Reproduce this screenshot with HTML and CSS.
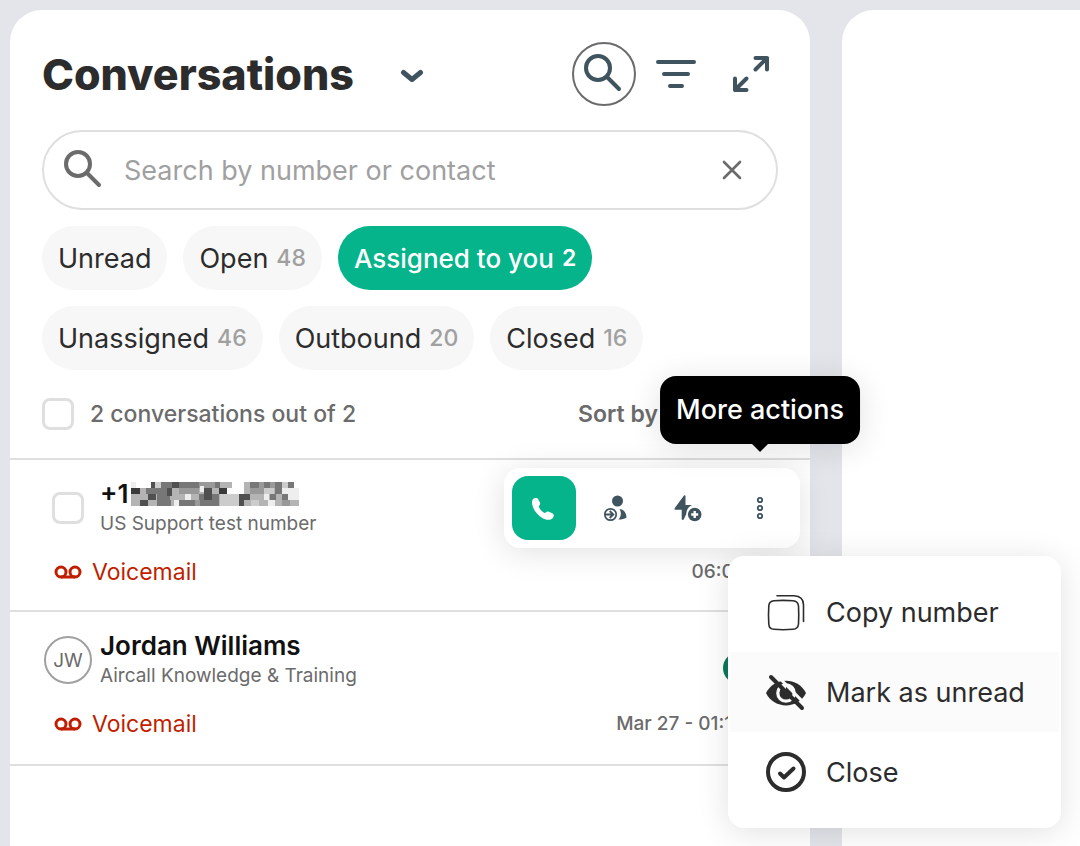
FILE: index.html
```
<!DOCTYPE html>
<html lang="en">
<head>
    <meta charset="UTF-8">
    <meta name="viewport" content="width=device-width, initial-scale=1.0">
    <title>Conversations</title>
    <link rel="stylesheet" href="styles.css">
</head>
<body>
    <div class="app">
        <main class="panel">
            <header class="panel-header">
                <h1>Conversations</h1>
                <button type="button" class="icon-button small" aria-label="Switch view">
                    <svg width="24" height="20" viewBox="0 0 24 20"><path d="M3.500 8.500 L12 15.500 L20.500 8.500" fill="none" stroke="currentColor" stroke-width="5" stroke-linecap="round" stroke-linejoin="round"/></svg>
                </button>
                <div class="header-tools">
                    <button type="button" class="icon-button ringed" aria-label="Search">
                        <svg width="60" height="60" viewBox="0 0 60 60" fill="none" stroke="currentColor" stroke-width="4" stroke-linecap="round"><circle cx="24" cy="24" r="12"/><path d="M33 33 L45 45"/></svg>
                    </button>
                    <button type="button" class="icon-button" aria-label="Filter">
                        <svg width="40" height="32" viewBox="0 0 40 32" fill="none" stroke="currentColor" stroke-width="4" stroke-linecap="round"><path d="M2 4 H38 M8 16 H32 M14 28 H26"/></svg>
                    </button>
                    <button type="button" class="icon-button" aria-label="Expand">
                        <svg width="44" height="40" viewBox="0 0 44 40" fill="none" stroke="currentColor" stroke-width="4" stroke-linecap="round" stroke-linejoin="round"><path d="M29.500 4 H41 V15.500 M41 4 L29.500 15.500"/><path d="M9 24.500 V36 H20.500 M9 36 L20.500 24.500"/></svg>
                    </button>
                </div>
            </header>

            <form class="search">
                <svg width="40" height="40" viewBox="0 0 40 40" fill="none" stroke="currentColor" stroke-width="4" stroke-linecap="round"><circle cx="14" cy="14" r="12"/><path d="M23 23 L35 35"/></svg>
                <input type="text" placeholder="Search by number or contact" aria-label="Search by number or contact">
                <button type="button" class="icon-button small clear" aria-label="Clear search">
                    <svg width="20" height="20" viewBox="0 0 20 20"><path d="M2 2 L18 18 M18 2 L2 18" stroke="currentColor" stroke-width="2.600" stroke-linecap="round"/></svg>
                </button>
            </form>

            <div class="chips">
                <button type="button" class="chip">Unread</button>
                <button type="button" class="chip">Open <span>48</span></button>
                <button type="button" class="chip active">Assigned to you <span>2</span></button>
                <button type="button" class="chip">Unassigned <span>46</span></button>
                <button type="button" class="chip">Outbound <span>20</span></button>
                <button type="button" class="chip">Closed <span>16</span></button>
            </div>

            <div class="list-bar">
                <input type="checkbox" id="selectAll">
                <label for="selectAll">2 conversations out of 2</label>
                <button type="button" class="sort">Sort by</button>
            </div>

            <ul class="list">
                <li class="row">
                    <div class="contact">
                        <div class="slot"><input type="checkbox" id="pick" aria-label="Select conversation"></div>
                        <div class="who">
                            <h2>+1
                                <svg class="masked" width="168" height="24" viewBox="0 0 168 24" shape-rendering="crispEdges">
                                    <g fill="#b4b4b4"><path d="M0 12h168v12h-168z M9 6h159v6h-159z M89 0h12v6h-12z M113 0h6v6h-6z"/></g>
                                    <g fill="#777"><path d="M15 6h25v6h-25z M26 12h13v6h-13z M30 0h11v6h-11z M26 18h14v6h-14z M48 0h20v6h-20z M48 18h16v6h-16z M68 12h20v12h-20z M84 0h5v6h-5z M119 0h9v6h-9z M133 0h6v6h-6z M144 0h7v12h-7z M157 0h6v6h-6z M151 12h6v6h-6z M139 12h6v6h-6z"/></g>
                                    <g fill="#999"><path d="M68 0h16v6h-16z M48 6h20v6h-20z M54 12h5v6h-5z M128 0h5v12h-5z M64 18h5v6h-5z M139 0h5v6h-5z M151 18h8v6h-8z M119 6h9v6h-9z"/></g>
                                    <g fill="#505050"><path d="M20 0h4v6h-4z M36 6h5v8h-5z M41 0h7v6h-7z M17 12h8v6h-8z M9 18h8v6h-8z M73 6h8v12h-8z M108 12h5v12h-5z M113 12h6v6h-6z"/></g>
                                    <g fill="#3a3a3a"><path d="M0 6h9v6h-9z M88 6h8v6h-8z"/></g>
                                    <g fill="#ccc"><path d="M24 0h6v6h-6z M96 12h12v12h-12z M89 12h7v12h-7z M151 0h6v6h-6z M133 6h10v6h-10z M120 18h8v6h-8z"/></g>
                                    <g fill="#eee"><path d="M0 0h5v6h-5z M151 6h17v6h-17z M157 12h11v6h-11z M54 12h6v6h-6z M69 4h4v6h-4z M43 18h5v6h-5z M133 12h5v6h-5z M137 18h7v6h-7z"/></g>
                                    <g fill="#fff"><path d="M5 0h15v6h-15z M101 0h12v12h-12z M163 0h5v6h-5z M96 6h6v6h-6z"/></g>
                                </svg>
                            </h2>
                            <p>US Support test number</p>
                        </div>
                    </div>
                    <div class="event">
                        <svg width="28" height="14" viewBox="0 0 28 14" fill="none" stroke="currentColor" stroke-width="3"><circle cx="7" cy="7" r="5"/><circle cx="21" cy="7" r="5"/><path d="M7 12 H21"/></svg>
                        <span>Voicemail</span>
                        <time>06:07 pm</time>
                    </div>

                    <div class="actions">
                        <button type="button" class="action call" aria-label="Call">
                            <svg width="24" height="24" viewBox="1 -1 24 24" fill="currentColor"><path d="M2.500 1.700 C4 .7 6.500 1 7.400 2.500 L9 5.700 C9.700 7.200 8.300 8.400 7.800 9.500 C8.500 12 10.800 14.600 13.500 16 C14.700 15.800 15.600 14.300 17.200 14.600 L21.300 16.300 C23.300 17.200 23 19.600 21.900 20.900 C19.500 23.500 15 23.300 11.300 21 C6.200 18 2.200 12.600 1.200 7.500 C.8 5.200.9 2.800 2.500 1.700 Z"/></svg>
                        </button>
                        <button type="button" class="action" aria-label="Assign">
                            <svg width="28" height="28" viewBox="0 0 28 28"><circle cx="15.500" cy="7" r="5.500" fill="currentColor"/><path d="M17.500 15 C21.500 15.300 24.400 18.500 24.500 23.500 C22.500 25 20 25.500 16.500 25.500 C19.500 22 19.500 18.500 17.500 15 Z" fill="currentColor"/><circle cx="8.500" cy="20.500" r="5.700" fill="none" stroke="currentColor" stroke-width="1.700"/><path d="M3 20.500 H11 M7.700 17 L11.300 20.500 L7.700 24" fill="none" stroke="currentColor" stroke-width="1.900"/></svg>
                        </button>
                        <button type="button" class="action" aria-label="Quick action">
                            <svg width="28" height="28" viewBox="0 0 28 28"><path d="M10 1.400 C10.700 1 11.500 1.300 11.500 2 V11 H18 C14.500 12.700 12.200 16 12.300 20 L9.700 25.500 C9.200 26.200 7.700 26 7.700 25 V15.800 H1.600 C.6 15.800.3 15 .8 14.100 Z" fill="currentColor"/><circle cx="20.700" cy="20.500" r="6.800" fill="currentColor"/><path d="M20.700 17 V24 M17.200 20.500 H24.200" stroke="#fff" stroke-width="2.400"/></svg>
                        </button>
                        <div class="more">
                            <button type="button" class="action" aria-label="More actions" aria-describedby="moreTip" aria-expanded="true">
                                <svg width="8" height="24" viewBox="0 0 8 24" fill="none" stroke="currentColor" stroke-width="1.800"><circle cx="4" cy="4" r="2.200"/><circle cx="4" cy="12" r="2.200"/><circle cx="4" cy="20" r="2.200"/></svg>
                            </button>
                            <div class="tooltip" id="moreTip" role="tooltip">More actions</div>
                            <div class="menu">
                                <button type="button" class="menu-item">
                                    <svg width="40" height="40" viewBox="0 0 40 40" fill="none" stroke="currentColor" stroke-width="1.600" stroke-linecap="round"><path d="M8 8.700 Q17 8 27 8.700 Q32 9 32.500 14 Q33 23 32.500 32 Q32 37 27 37.300 Q17 38.200 8 37.300 Q3 37 2.800 32 Q2.200 23 2.800 14 Q3 9 8 8.700 Z"/><path d="M11 3.700 H28 Q37.500 4 37.500 13 V29.500"/></svg>
                                    Copy number
                                </button>
                                <button type="button" class="menu-item hovered">
                                    <svg width="40" height="40" viewBox="0 0 40 40"><path d="M0 21 C8 4.500 32 4.500 40 21 C32 37.500 8 37.500 0 21 Z" fill="currentColor"/><circle cx="20" cy="21" r="8.200" fill="none" stroke="#fbfbfb" stroke-width="3.200"/><path d="M15 14 L20 19 V13 Z" fill="#fbfbfb"/><path d="M8.500 1 L40 33" stroke="#fbfbfb" stroke-width="3"/><path d="M5 5 L36 36" stroke="currentColor" stroke-width="4" stroke-linecap="round"/></svg>
                                    Mark as unread
                                </button>
                                <button type="button" class="menu-item">
                                    <svg width="40" height="40" viewBox="0 0 40 40" fill="none" stroke="currentColor" stroke-width="4" stroke-linecap="round" stroke-linejoin="round"><circle cx="20" cy="20" r="18"/><path d="M14 21.500 L18 25.500 L27.500 16.500"/></svg>
                                    Close
                                </button>
                            </div>
                        </div>
                    </div>
                </li>
                <li class="row">
                    <div class="contact">
                        <div class="slot avatar">JW</div>
                        <div class="who">
                            <h2>Jordan Williams</h2>
                            <p>Aircall Knowledge &amp; Training</p>
                        </div>
                        <span class="badge"></span>
                    </div>
                    <div class="event">
                        <svg width="28" height="14" viewBox="0 0 28 14" fill="none" stroke="currentColor" stroke-width="3"><circle cx="7" cy="7" r="5"/><circle cx="21" cy="7" r="5"/><path d="M7 12 H21"/></svg>
                        <span>Voicemail</span>
                        <time>Mar 27 - 01:10 pm</time>
                    </div>
                </li>
            </ul>
        </main>
        <section class="detail"></section>
    </div>
</body>
</html>
```
FILE: styles.css
```
* {
    box-sizing: border-box;
    margin: 0;
    padding: 0;
}

body {
    font-family: Inter, "Liberation Sans", sans-serif;
    font-size: 27px;
    color: #2c2c2c;
    background-color: #e4e5ea;
    overflow: hidden;
}

button,
input {
    font: inherit;
    color: inherit;
    border: none;
    background: none;
}

button {
    cursor: pointer;
}

svg {
    display: block;
    flex: none;
}

.app {
    display: grid;
    grid-template-columns: minmax(0, 800px) minmax(0, 1fr);
    gap: 32px;
    min-height: 100vh;
    padding: 10px 0 0 10px;
}

.panel {
    min-width: 0;
    background-color: #fff;
    border-radius: 32px 32px 0 0;
}

.detail {
    background-color: #fff;
    border-radius: 32px 0 0 0;
}

/* Header */
.panel-header {
    display: flex;
    align-items: center;
    padding: 32px 30px 24px 32px;
}

.panel-header h1 {
    font-size: 43px;
    font-weight: 800;
    line-height: 64px;
    margin-right: 42px;
}

.header-tools {
    display: flex;
    gap: 8px;
    margin-left: auto;
}

.icon-button {
    display: flex;
    align-items: center;
    justify-content: center;
    width: 64px;
    height: 64px;
    color: #3f545f;
}

.icon-button.small {
    width: auto;
    height: auto;
    padding: 4px;
}

.icon-button.ringed {
    border: 2px solid #6b6b6b;
    border-radius: 50%;
}

/* Search box */
.search {
    display: flex;
    align-items: center;
    height: 80px;
    margin: 0 32px 16px;
    padding: 0 30px 0 20px;
    border: 2px solid #dfdfdf;
    border-radius: 40px;
    color: #6b6b6b;
}

.search input {
    flex: 1;
    min-width: 0;
    padding: 0 20px;
    outline: none;
}

.search input::placeholder {
    color: #a0a0a0;
    opacity: 1;
}

.search .clear {
    color: #6b6b6b;
}

/* Filters */
.chips {
    display: flex;
    flex-wrap: wrap;
    gap: 16px;
    padding: 0 32px 28px;
}

.chip {
    display: flex;
    align-items: center;
    gap: 8px;
    height: 64px;
    padding: 0 16px;
    border-radius: 32px;
    background-color: #f7f7f7;
}

.chip span {
    font-size: 23px;
    font-weight: 500;
    color: #a0a0a0;
}

.chip.active {
    background-color: #05b48a;
    color: #fff;
    font-size: 26px;
    font-weight: 500;
}

.chip.active span {
    color: #fff;
    font-weight: 600;
}

/* List */
.list-bar {
    display: flex;
    align-items: center;
    gap: 16px;
    padding: 0 32px 28px;
    font-size: 23px;
    font-weight: 500;
    line-height: 32px;
    color: #6b6b6b;
}

.sort {
    margin-left: auto;
    padding-right: 120px;
    font-weight: 600;
}

input[type="checkbox"] {
    appearance: none;
    flex: none;
    width: 32px;
    height: 32px;
    border: 3px solid #dfdfdf;
    border-radius: 8px;
    background-color: #fff;
}

.list {
    list-style: none;
    border-top: 2px solid #dfdfdf;
}

.row {
    position: relative;
    padding: 24px 32px 22px 34px;
    border-bottom: 2px solid #dfdfdf;
}

.row:last-child {
    padding-bottom: 24px;
}

.contact {
    display: flex;
    align-items: center;
    gap: 8px;
    height: 48px;
    margin-bottom: 24px;
}

.slot {
    display: flex;
    align-items: center;
    justify-content: center;
    width: 48px;
    height: 48px;
}

.avatar {
    border: 2px solid #a0a0a0;
    border-radius: 50%;
    font-size: 19px;
    color: #6b6b6b;
}

.who h2 {
    display: flex;
    align-items: center;
    gap: 2px;
    font-size: 26px;
    font-weight: 600;
    line-height: 28px;
    color: #111;
}

.who p {
    margin-top: 4px;
    font-size: 19px;
    line-height: 24px;
    color: #6b6b6b;
}

.badge {
    align-self: flex-end;
    width: 55px;
    height: 32px;
    margin-left: auto;
    border-radius: 16px;
    background-color: #0b7a5b;
}

.event {
    display: flex;
    align-items: center;
    gap: 10px;
    padding-left: 10px;
    font-size: 23px;
    line-height: 32px;
    color: #bf1f00;
}

.event time {
    margin-left: auto;
    font-size: 19px;
    font-weight: 500;
    color: #6b6b6b;
}

/* Floating action bar over the first row */
.actions {
    position: absolute;
    top: 8px;
    right: 10px;
    z-index: 2;
    display: flex;
    gap: 8px;
    padding: 8px;
    border-radius: 16px;
    background-color: #fff;
    box-shadow: 0 4px 32px rgba(0, 0, 0, 0.12);
}

.action {
    display: flex;
    align-items: center;
    justify-content: center;
    width: 64px;
    height: 64px;
    border-radius: 16px;
    color: #3f545f;
}

.action.call {
    background-color: #05b48a;
    color: #fff;
}

.more {
    position: relative;
}

.tooltip {
    position: absolute;
    bottom: calc(100% + 32px);
    left: 50%;
    transform: translateX(-50%);
    padding: 16px;
    border-radius: 16px;
    background-color: #000;
    color: #fff;
    font-weight: 500;
    line-height: 36px;
    white-space: nowrap;
    box-shadow: 0 4px 32px rgba(0, 0, 0, 0.12);
}

.tooltip::after {
    content: "";
    position: absolute;
    top: 100%;
    left: 50%;
    margin-left: -8px;
    border: 8px solid transparent;
    border-top-color: #000;
}

.menu {
    position: absolute;
    top: calc(100% + 16px);
    left: 0;
    min-width: 333px;
    padding: 16px 2px;
    border-radius: 16px;
    background-color: #fff;
    box-shadow: 0 4px 32px rgba(0, 0, 0, 0.12);
}

.menu-item {
    display: flex;
    align-items: center;
    gap: 20px;
    width: 100%;
    height: 80px;
    padding: 0 32px 0 36px;
    white-space: nowrap;
}

.menu-item.hovered {
    background-color: #fbfbfb;
}
```
